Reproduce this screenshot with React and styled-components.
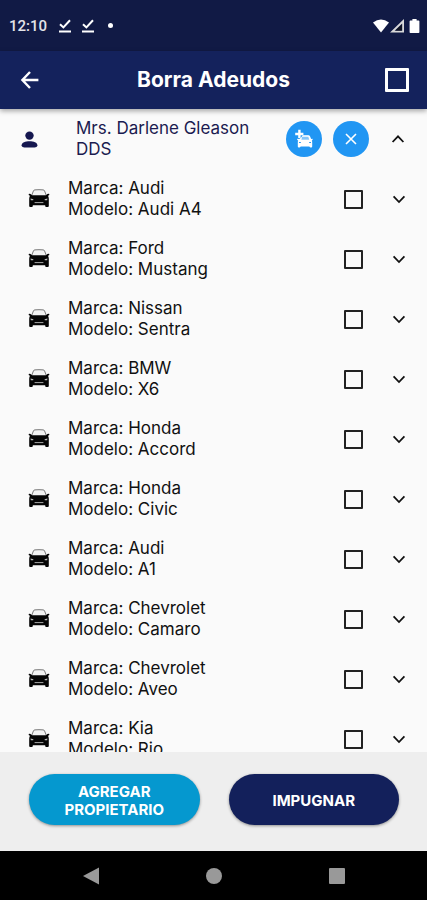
import React from 'react'
import styled, { createGlobalStyle } from 'styled-components';

const cars = [
    { marca: 'Audi', modelo: 'Audi A4' },
    { marca: 'Ford', modelo: 'Mustang' },
    { marca: 'Nissan', modelo: 'Sentra' },
    { marca: 'BMW', modelo: 'X6' },
    { marca: 'Honda', modelo: 'Accord' },
    { marca: 'Honda', modelo: 'Civic' },
    { marca: 'Audi', modelo: 'A1' },
    { marca: 'Chevrolet', modelo: 'Camaro' },
    { marca: 'Chevrolet', modelo: 'Aveo' },
    { marca: 'Kia', modelo: 'Rio' },
];

const CarIcon = () => (
    <svg width="22" height="20" viewBox="0 0 22 20" aria-hidden="true">
        <path d="M3.6 6.6 L5.4 2 Q5.8 1 6.8 0.9 Q11 0.5 15.2 0.9 Q16.2 1 16.6 2 L18.4 6.6 Z" fill="#f4f4f4" stroke="#777" strokeWidth="1" />
        <path d="M0.6 5 Q2.2 4.2 3.4 5.8 L4.4 6.4 H17.6 L18.6 5.8 Q19.8 4.2 21.4 5 Q21.4 6.4 20 6.8 Q20.8 8 20.8 10 V17 Q20.8 18 19.8 18 H18.2 Q17.2 18 17.2 17 V16.2 H4.8 V17 Q4.8 18 3.8 18 H2.2 Q1.2 18 1.2 17 V10 Q1.2 8 2 6.8 Q0.6 6.4 0.6 5 Z" fill="#050505" />
        <path d="M2.6 9.4 L5.4 10.2 L5.2 11.2 H2.8 Z M19.4 9.4 L16.6 10.2 L16.8 11.2 H19.2 Z" fill="#bbb" />
        <path d="M6.6 13.6 H15.4" stroke="#aaa" strokeWidth="1" />
    </svg>
)

const AddCarIcon = () => (
    <svg width="20" height="20" viewBox="0 0 20 20" fill="#fff" aria-hidden="true">
        <path d="M4.2 0.8 H6.6 V3.8 H9.4 V6.2 H6.6 V9 H4.2 V6.2 H1.2 V3.8 H4.2 Z" />
        <path d="M8.2 8.9 L9.3 6.4 H14.6 L16 10.4 H7.4 Z" fillOpacity="0.45" />
        <path fillRule="evenodd" d="M8.6 6.3 H14.4 Q15.6 6.3 16 7.2 L17.2 10 L18.6 9.8 V11 L17.8 11.6 Q18.2 12.2 18.2 13 V17.4 Q18.2 18.4 17.2 18.4 H16.4 Q15.4 18.4 15.4 17.6 H6.6 Q6.6 18.4 5.6 18.4 H4.8 Q3.8 18.4 3.8 17.4 V13 Q3.8 12.2 4.2 11.6 L3.2 11 V9.8 L5.2 10 L7.2 8.4 Z M8.6 7.7 L7.4 10.4 H15.2 L14.3 7.7 Z M5 12.9 V13.9 H7 V13.3 Z M17 12.9 V13.9 H15 V13.3 Z" />
    </svg>
)

const PersonIcon = () => (
    <svg width="17" height="17" viewBox="0 0 17 17" fill="#15174f" aria-hidden="true">
        <circle cx="8.5" cy="4.6" r="4.2" />
        <path d="M0.6 14.3 C0.6 11.6 4.4 10.2 8.5 10.2 C12.6 10.2 16.4 11.6 16.4 14.3 C16.4 16 14.8 16.5 13.6 16.5 H3.4 C2.2 16.5 0.6 16 0.6 14.3 Z" />
    </svg>
)

const Chevron = ({ up }) => (
    <svg width="24" height="24" viewBox="0 0 24 24" fill="none" stroke="#111" strokeWidth="1.8" aria-hidden="true">
        <path d={up ? 'M6.6 15 L12 9.4 L17.4 15' : 'M6.6 9.4 L12 15 L17.4 9.4'} />
    </svg>
)

const DoneIcon = () => (
    <svg width="14" height="16" viewBox="0 0 14 16" fill="none" stroke="#fff" strokeWidth="2" aria-hidden="true">
        <path d="M2 6.2 L5.4 9.4 L12 2.2 M1 13.6 H13" />
    </svg>
)

const CarRow = ({ id, marca, modelo }) => (
    <Row>
        <CarIcon />
        <Description htmlFor={id}>
            Marca: {marca}
            <br />
            Modelo: {modelo}
        </Description>
        <Check type="checkbox" id={id} />
        <IconButton type="button" aria-label="Ver detalle">
            <Chevron />
        </IconButton>
    </Row>
)

const App = () => (
    <>
        <GlobalStyle />
        <Screen>
            <StatusBar>
                <Clock>12:10</Clock>
                <DoneIcon />
                <DoneIcon />
                <Dot />
                <Signals width="48" height="16" viewBox="0 0 48 16" aria-hidden="true">
                    <path d="M0 4.6 Q8 -1.6 16 4.6 L8 14.4 Z" fill="#fff" />
                    <path fillRule="evenodd" d="M17 14.6 L31 1 V14.6 Z M21.6 12.8 H29.2 V5.4 Z" fill="#d8d8d8" />
                    <path d="M22.6 12.4 H28.8 V6.4 Z" fill="#10131f" />
                    <path d="M37.4 2.4 H39.4 V1 H43.6 V2.4 H45.6 Q46.4 2.4 46.4 3.2 V14.2 Q46.4 15 45.6 15 H37.4 Q36.6 15 36.6 14.2 V3.2 Q36.6 2.4 37.4 2.4 Z" fill="#fff" />
                </Signals>
            </StatusBar>
            <Header>
                <IconButton type="button" aria-label="Regresar">
                    <svg width="24" height="24" viewBox="0 0 24 24" fill="none" stroke="#fff" strokeWidth="2.4" aria-hidden="true">
                        <path d="M20.4 12 H4.6 M12 4 L4.4 12 L12 20" />
                    </svg>
                </IconButton>
                <Title>Borra Adeudos</Title>
                <Check type="checkbox" $large aria-label="Seleccionar todos" />
            </Header>
            <List>
                <Owner>
                    <PersonIcon />
                    <Name>Mrs. Darlene Gleason DDS</Name>
                    <RoundButton type="button" aria-label="Agregar auto">
                        <AddCarIcon />
                    </RoundButton>
                    <RoundButton type="button" aria-label="Quitar propietario">
                        <svg width="12" height="12" viewBox="0 0 12 12" stroke="#fff" strokeWidth="1.6" aria-hidden="true">
                            <path d="M1 1 L11 11 M11 1 L1 11" />
                        </svg>
                    </RoundButton>
                    <OwnerToggle type="button" aria-label="Contraer">
                        <Chevron up />
                    </OwnerToggle>
                </Owner>
                {cars.map((car, i) => (
                    <CarRow key={i} id={`car-${i}`} {...car} />
                ))}
            </List>
            <Footer>
                <Action type="button" $color="#0598cf">AGREGAR PROPIETARIO</Action>
                <Action type="button" $color="#13205b">IMPUGNAR</Action>
            </Footer>
            <NavBar>
                <IconButton type="button" aria-label="Atrás">
                    <svg width="18" height="18" viewBox="0 0 18 18"><path d="M1 9 L17 0.5 V17.5 Z" fill="#999" /></svg>
                </IconButton>
                <IconButton type="button" aria-label="Inicio">
                    <svg width="18" height="18" viewBox="0 0 18 18"><circle cx="9" cy="9" r="8" fill="#999" /></svg>
                </IconButton>
                <IconButton type="button" aria-label="Recientes">
                    <svg width="18" height="18" viewBox="0 0 18 18"><rect x="1" y="1" width="16" height="16" rx="1" fill="#999" /></svg>
                </IconButton>
            </NavBar>
        </Screen>
    </>
)

export default App

const GlobalStyle = createGlobalStyle`
    * {
        box-sizing: border-box;
    }
    body {
        margin: 0;
        font-family: Inter, "Open Sans", sans-serif;
    }
    button {
        font-family: inherit;
    }
`
const Screen = styled.div`
    display: flex;
    flex-direction: column;
    height: 100vh;
    background-color: #fafafa;
`
const StatusBar = styled.div`
    display: flex;
    align-items: center;
    gap: 9px;
    height: 51px;
    padding: 0 6px 0 9px;
    background-color: #111a45;
`
const Clock = styled.div`
    margin-right: 2px;
    font-family: Roboto, sans-serif;
    font-size: 15px;
    font-weight: 500;
    color: #e4e4e8;
`
const Dot = styled.div`
    width: 5px;
    height: 5px;
    margin-left: 4px;
    border-radius: 50%;
    background-color: #fff;
`
const Signals = styled.svg`
    margin-left: auto;
`
const Header = styled.header`
    position: relative;
    display: flex;
    align-items: center;
    justify-content: space-between;
    height: 58px;
    padding: 0 18px;
    background-color: #14225c;
    box-shadow: 0 2px 5px rgba(0, 0, 0, 0.35);
`
const Title = styled.h1`
    margin: 0;
    font-size: 21px;
    font-weight: 700;
    line-height: 28px;
    color: #fff;
`
const IconButton = styled.button`
    display: flex;
    flex: none;
    align-items: center;
    justify-content: center;
    width: 24px;
    height: 24px;
    padding: 0;
    border: none;
    background: none;
`
const Check = styled.input`
    appearance: none;
    flex: none;
    width: ${props => props.$large ? 24 : 19}px;
    height: ${props => props.$large ? 24 : 19}px;
    margin: 0;
    border: ${props => props.$large ? '3px solid #fff' : '2px solid #222'};
    border-radius: 1px;

    &:checked {
        background-color: #0598cf;
    }
`
const List = styled.main`
    flex: 1;
    min-height: 0;
    overflow-y: auto;
    scrollbar-width: none;
`
const Owner = styled.div`
    display: flex;
    align-items: center;
    gap: 11px;
    height: 60px;
    padding: 0 17px 0 21px;
`
const Name = styled.div`
    flex: 1;
    padding: 0 5px 0 27px;
    font-size: 17px;
    line-height: 21px;
    color: #1b1b50;
`
const RoundButton = styled.button`
    display: flex;
    flex: none;
    align-items: center;
    justify-content: center;
    width: 36px;
    height: 36px;
    padding: 0;
    border: none;
    border-radius: 50%;
    background-color: #2196f3;
`
const OwnerToggle = styled(IconButton)`
    margin-left: 6px;
`
const Row = styled.div`
    display: flex;
    align-items: center;
    height: 60px;
    padding: 0 16px 0 28px;
    gap: 24px;
`
const Description = styled.label`
    flex: 1;
    margin-left: -6px;
    font-size: 17px;
    line-height: 21px;
    color: #111;
`
const Footer = styled.footer`
    display: flex;
    gap: 29px;
    padding: 22px 28px 26px 29px;
    background-color: #eee;
`
const Action = styled.button`
    flex: 1;
    min-width: 0;
    height: 51px;
    padding: 2px 30px 0;
    border: none;
    border-radius: 26px;
    background-color: ${props => props.$color};
    box-shadow: 0 1px 3px rgba(0, 0, 0, 0.4);
    font-size: 15px;
    font-weight: 700;
    line-height: 18px;
    color: #fff;
`
const NavBar = styled.nav`
    display: flex;
    align-items: center;
    justify-content: center;
    gap: 99px;
    height: 49px;
    background-color: #000;
`
